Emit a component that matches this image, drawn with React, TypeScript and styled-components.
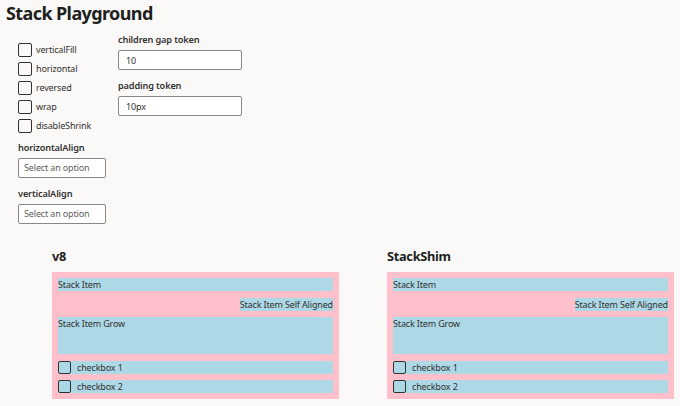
import React from "react";
import styled, { createGlobalStyle } from "styled-components";

const Global = createGlobalStyle`
  html, body {
    margin: 0;
    padding: 0;
    background: #faf9f8;
  }
  body {
    font-family: "Noto Sans", "Open Sans", sans-serif;
    color: #323130;
  }
`;

const Page = styled.div`
  padding: 0 6px;
  width: 680px;
  box-sizing: border-box;
`;

const Title = styled.h1`
  margin: 0;
  font-size: 18px;
  letter-spacing: -0.6px;
  line-height: 26px;
  font-weight: 700;
  color: #201f1e;
`;

const Controls = styled.div`
  display: flex;
  flex-direction: column;
  padding-left: 12px;
  margin-top: 7px;
`;

const TopRow = styled.div`
  display: flex;
  align-items: flex-start;
`;

const CheckList = styled.div`
  width: 100px;
  display: flex;
  flex-direction: column;
  gap: 5px;
  padding-top: 10px;
`;

const CheckRow = styled.label`
  display: flex;
  align-items: center;
  gap: 4px;
  height: 14px;
  font-size: 9px;
  letter-spacing: -0.15px;
  line-height: 14px;
  color: #323130;
`;

const Box = styled.span<{ $size: number }>`
  width: ${(p) => p.$size}px;
  height: ${(p) => p.$size}px;
  box-sizing: border-box;
  border: 1px solid #323130;
  border-radius: 2px;
  flex: none;
`;

const FieldColumn = styled.div`
  display: flex;
  flex-direction: column;
  gap: 9px;
`;

const Field = styled.div`
  display: flex;
  flex-direction: column;
  gap: 3px;
`;

const FieldLabel = styled.div`
  font-size: 9.2px;
  letter-spacing: -0.15px;
  line-height: 14px;
  font-weight: 600;
  color: #323130;
`;

const TextInput = styled.input<{ $width: number }>`
  width: ${(p) => p.$width}px;
  height: 20px;
  box-sizing: border-box;
  border: 1px solid #8a8886;
  border-radius: 2px;
  background: #ffffff;
  padding: 0 7px;
  font-family: inherit;
  font-size: 9px;
  letter-spacing: -0.15px;
  color: #323130;
  outline: none;
`;

const Dropdown = styled.div`
  width: 88px;
  height: 20px;
  box-sizing: border-box;
  border: 1px solid #8a8886;
  border-radius: 2px;
  background: #ffffff;
  padding: 0 5px;
  font-size: 9px;
  letter-spacing: -0.15px;
  line-height: 18px;
  color: #605e5c;
  white-space: nowrap;
`;

const SelectGroup = styled.div`
  display: flex;
  flex-direction: column;
  gap: 9px;
  margin-top: 8px;
`;

const Compare = styled.div`
  display: flex;
  gap: 48px;
  padding-left: 46px;
  margin-top: 23px;
`;

const Column = styled.section`
  width: 287px;
  display: flex;
  flex-direction: column;
  gap: 7px;
`;

const Heading = styled.h2`
  margin: 0;
  font-size: 12.8px;
  letter-spacing: -0.3px;
  line-height: 18px;
  font-weight: 700;
  color: #201f1e;
`;

const StackBox = styled.div`
  background: #ffc0cb;
  padding: 6px 6px 5.5px;
  display: flex;
  flex-direction: column;
  gap: 6.5px;
`;

const Item = styled.div<{ $grow?: boolean; $end?: boolean }>`
  background: #add8e6;
  height: ${(p) => (p.$grow ? 37 : 13)}px;
  font-size: 9px;
  letter-spacing: -0.15px;
  line-height: 13px;
  color: #323130;
  align-self: ${(p) => (p.$end ? "flex-end" : "stretch")};
  display: flex;
  align-items: flex-start;
  gap: 6px;
  white-space: nowrap;
`;

const checks = ["verticalFill", "horizontal", "reversed", "wrap", "disableShrink"];

function StackDemo({ title }: { title: string }) {
  return (
    <Column>
      <Heading>{title}</Heading>
      <StackBox>
        <Item>Stack Item</Item>
        <Item $end>Stack Item Self Aligned</Item>
        <Item $grow>Stack Item Grow</Item>
        <Item>
          <Box $size={13} />
          checkbox 1
        </Item>
        <Item>
          <Box $size={13} />
          checkbox 2
        </Item>
      </StackBox>
    </Column>
  );
}

export default function App() {
  return (
    <>
      <Global />
      <Page>
        <Title>Stack Playground</Title>
        <Controls>
          <TopRow>
            <CheckList>
              {checks.map((c) => (
                <CheckRow key={c}>
                  <Box $size={14} />
                  {c}
                </CheckRow>
              ))}
            </CheckList>
            <FieldColumn>
              <Field>
                <FieldLabel>children gap token</FieldLabel>
                <TextInput $width={124} defaultValue="10" />
              </Field>
              <Field>
                <FieldLabel>padding token</FieldLabel>
                <TextInput $width={124} defaultValue="10px" />
              </Field>
            </FieldColumn>
          </TopRow>
          <SelectGroup>
            <Field>
              <FieldLabel>horizontalAlign</FieldLabel>
              <Dropdown>Select an option</Dropdown>
            </Field>
            <Field>
              <FieldLabel>verticalAlign</FieldLabel>
              <Dropdown>Select an option</Dropdown>
            </Field>
          </SelectGroup>
        </Controls>
        <Compare>
          <StackDemo title="v8" />
          <StackDemo title="StackShim" />
        </Compare>
      </Page>
    </>
  );
}
